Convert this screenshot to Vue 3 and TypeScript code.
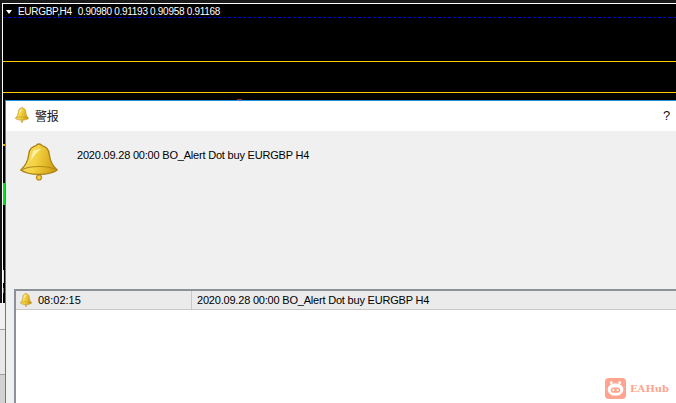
<script setup lang="ts">
const message = '2020.09.28 00:00 BO_Alert Dot buy EURGBP H4'
</script>

<template>
  <div class="screen">
    <div class="chart">
      <div class="chart-head">
        <span class="tri"></span>
        <span class="symbol">EURGBP,H4</span>
        <span class="quotes">0.90980 0.91193 0.90958 0.91168</span>
      </div>
      <div class="dash"></div>
      <div class="level first"></div>
      <div class="level second"></div>
      <div class="tick"></div>
      <div class="green"></div>
      <div class="wick"></div>
      <div class="blue"></div>
      <div class="red"></div>
    </div>
    <div class="side">
      <div class="side-row a"></div>
      <div class="side-row b"></div>
      <div class="side-row c"></div>
    </div>

    <section class="dialog">
      <header class="title">
        <svg class="bell-s" viewBox="0 0 38 38" preserveAspectRatio="none"><use href="#bell" /></svg>
        <span class="title-text">警报</span>
        <span class="help">?</span>
      </header>
      <div class="body">
        <div class="msg">
          <svg class="bell-l" viewBox="0 0 38 38">
            <defs>
              <linearGradient id="gold" x1="0" y1="0" x2="1" y2="0.2">
                <stop offset="0" stop-color="#f5e070" />
                <stop offset="0.5" stop-color="#f4d242" />
                <stop offset="1" stop-color="#d2a316" />
              </linearGradient>
              <g id="bell">
                <circle cx="19" cy="34.500" r="2.500" fill="#f0cd4a" stroke="#b98c14" stroke-width="1.200" />
                <path d="M19 1c-1.200 0-2.300.5-2.800 1.600C11.500 3.600 9.300 6.500 8.800 11 8 18 6 22.500.8 27c3.800 2.800 10.700 4.300 18.200 4.300S33.400 29.800 37.200 27C32 22.500 30 18 29.200 11 28.700 6.500 26.500 3.600 21.800 2.600 21.300 1.500 20.200 1 19 1z" fill="url(#gold)" stroke="#a97f12" stroke-width="1.300" stroke-linejoin="round" />
                <path d="M2.500 26.500c3.500 -2 10 -3 16.500 -3s13 1 16.500 3" fill="none" stroke="#b08a1a" stroke-width="1.200" />
                <path d="M11 18c.6-5 1.200-8 2.800-11l7.200-1c-4.500 3.500-7.500 7-10 12z" fill="#fff6bf" opacity=".8" />
              </g>
            </defs>
            <use href="#bell" />
          </svg>
          <span class="msg-text">{{ message }}</span>
        </div>
        <div class="list">
          <div class="row">
            <div class="time-cell">
              <svg class="bell-m" viewBox="0 0 38 38" preserveAspectRatio="none"><use href="#bell" /></svg>
              <span>08:02:15</span>
            </div>
            <div class="msg-cell">{{ message }}</div>
          </div>
        </div>
      </div>
    </section>

    <div class="mark">
      <svg class="pig" viewBox="0 0 20 20">
        <rect width="20" height="20" rx="3.500" fill="#ffa48e" />
        <circle cx="6" cy="4.500" r="1.300" fill="#fff" />
        <circle cx="14" cy="4.500" r="1.300" fill="#fff" />
        <ellipse cx="10" cy="11" rx="7.500" ry="6" fill="#fff" />
        <rect x="5.500" y="9" width="9" height="5" rx="2.500" fill="#ffa48e" />
        <circle cx="8" cy="11.500" r="1" fill="#fff" />
        <circle cx="12" cy="11.500" r="1" fill="#fff" />
      </svg>
      <span class="mark-text">EAHub</span>
    </div>
  </div>
</template>

<style>
html, body { margin: 0; padding: 0; background: #fff; }
</style>

<style scoped>
.screen {
  position: relative;
  width: 676px;
  height: 403px;
  overflow: hidden;
  background: #fff;
  font-family: "Liberation Sans", Arial, sans-serif;
  font-size: 11px;
  letter-spacing: -0.2px;
  color: #000;
}
.chart {
  position: relative;
  box-sizing: border-box;
  height: 303px;
  background: #000;
  border-top: 3px solid #1a1a1a;
  border-left: 2px solid #151515;
  box-shadow: inset 1px 1px 0 #fff;
}
.chart-head {
  display: flex;
  align-items: center;
  box-sizing: border-box;
  height: 14px;
  padding: 3px 0 0 4px;
  color: #fff;
  font-size: 10px;
  letter-spacing: -0.3px;
  line-height: 11px;
  white-space: nowrap;
}
.tri {
  width: 0;
  height: 0;
  margin-right: 6px;
  border-left: 3.500px solid transparent;
  border-right: 3.500px solid transparent;
  border-top: 4px solid #fff;
}
.symbol { margin-right: 6px; }
.dash {
  height: 0;
  margin-left: 1px;
  border-top: 1px dashed #0000d8;
}
.level {
  height: 1px;
  background: #ffcc00;
  margin-left: 1px;
}
.level.first { margin-top: 43px; }
.level.second { margin-top: 30px; }
.tick {
  width: 3px;
  height: 2px;
  margin: 51px 0 0 1px;
  background: #e0b000;
}
.green {
  width: 3px;
  height: 22px;
  margin: 37px 0 0 1px;
  background: #00e020;
}
.wick {
  width: 1px;
  height: 13px;
  margin: 65px 0 0 1px;
  background: #d8d8d8;
}
.blue {
  width: 1px;
  height: 5px;
  margin: 5px 0 0 1px;
  background: #2a7cff;
}
.red {
  position: absolute;
  left: 235px;
  top: 96px;
  width: 5px;
  height: 1px;
  background: #b02020;
}
.side { height: 100px; background: #f0f0f0; }
.side-row { border-bottom: 1px solid #a0a0a0; box-sizing: border-box; }
.side-row.a { height: 27px; }
.side-row.b { height: 45px; background: #e8e8e8; }
.side-row.c { height: 28px; background: #d2d2d2; border-bottom: 0; }

.dialog {
  position: absolute;
  left: 5px;
  top: 100px;
  width: 671px;
  height: 303px;
  box-sizing: border-box;
  display: flex;
  flex-direction: column;
  border-top: 1px solid #1e8fd8;
  border-left: 1px solid #1e8fd8;
  background: #f0f0f0;
}
.title {
  display: flex;
  align-items: center;
  box-sizing: border-box;
  height: 30px;
  flex: none;
  background: #fff;
  padding: 0 0 2px 9px;
}
.bell-s { width: 14px; height: 16px; display: block; }
.title-text {
  margin-left: 6px;
  font-family: "Noto Sans CJK SC", sans-serif;
  font-size: 12px;
  color: #111;
}
.help {
  margin-left: auto;
  margin-right: 6px;
  font-size: 13px;
  color: #111;
}
.body {
  display: flex;
  flex-direction: column;
  flex: 1;
  min-height: 0;
  padding-left: 8px;
}
.msg {
  display: flex;
  align-items: flex-start;
  height: 158px;
  flex: none;
  padding: 12px 0 0 6px;
  box-sizing: border-box;
}
.bell-l { width: 38px; height: 38px; flex: none; display: block; }
.msg-text { margin: 6px 0 0 19px; white-space: nowrap; }
.list {
  flex: 1;
  min-height: 0;
  background: #fff;
  border-top: 2px solid #8a9198;
  border-left: 2px solid #8a9198;
}
.row {
  display: flex;
  height: 18px;
  background: #ebebeb;
  border-bottom: 1px solid #c8c8c8;
  line-height: 18px;
}
.time-cell {
  display: flex;
  align-items: center;
  width: 176px;
  flex: none;
  box-sizing: border-box;
  padding-left: 4px;
  border-right: 1px solid #c8c8c8;
}
.bell-m { width: 12px; height: 14px; margin-right: 6px; display: block; }
.time-cell span { letter-spacing: 0; }
.msg-cell { padding-left: 5px; white-space: nowrap; }
.mark {
  position: absolute;
  left: 605px;
  top: 378px;
  display: flex;
  align-items: center;
}
.pig { width: 21px; height: 21px; display: block; }
.mark-text {
  margin-left: 4px;
  font-family: "DejaVu Serif", serif;
  font-weight: 700;
  font-size: 10px;
  letter-spacing: 0;
  color: #ffa48e;
}
</style>
